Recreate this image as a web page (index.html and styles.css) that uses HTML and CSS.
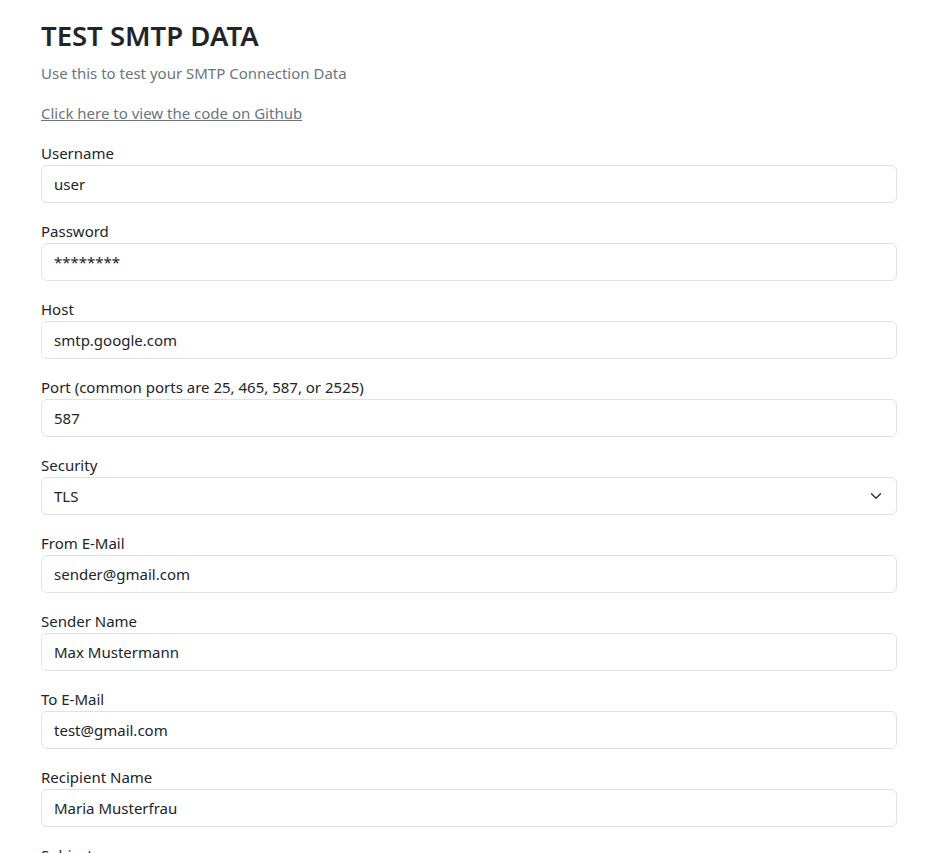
FILE: index.html
```html
<!DOCTYPE html>
<html lang="en">
<head>
<meta charset="utf-8">
<title>Test SMTP Data</title>
<link rel="stylesheet" href="styles.css">
</head>
<body>
<main class="container">
  <h2 class="title">TEST SMTP DATA</h2>
  <p class="lead-text">Use this to test your SMTP Connection Data</p>
  <p class="lead-text"><a class="gh-link" href="#">Click here to view the code on Github</a></p>
  <form class="form">
    <div class="field">
      <label class="label" for="username">Username</label>
      <input class="input" id="username" type="text" value="user">
    </div>
    <div class="field">
      <label class="label" for="password">Password</label>
      <input class="input" id="password" type="text" value="********">
    </div>
    <div class="field">
      <label class="label" for="host">Host</label>
      <input class="input" id="host" type="text" value="smtp.google.com">
    </div>
    <div class="field">
      <label class="label" for="port">Port (common ports are 25, 465, 587, or 2525)</label>
      <input class="input" id="port" type="text" value="587">
    </div>
    <div class="field">
      <label class="label" for="security">Security</label>
      <select class="input select" id="security">
        <option>TLS</option>
        <option>SSL</option>
        <option>None</option>
      </select>
    </div>
    <div class="field">
      <label class="label" for="from">From E-Mail</label>
      <input class="input" id="from" type="text" value="sender@gmail.com">
    </div>
    <div class="field">
      <label class="label" for="sender">Sender Name</label>
      <input class="input" id="sender" type="text" value="Max Mustermann">
    </div>
    <div class="field">
      <label class="label" for="to">To E-Mail</label>
      <input class="input" id="to" type="text" value="test@gmail.com">
    </div>
    <div class="field">
      <label class="label" for="recipient">Recipient Name</label>
      <input class="input" id="recipient" type="text" value="Maria Musterfrau">
    </div>
    <div class="field">
      <label class="label" for="subject">Subject</label>
      <input class="input" id="subject" type="text" value="Test">
    </div>
  </form>
</main>
</body>
</html>
```

FILE: styles.css
```css
html, body {
  margin: 0;
  padding: 0;
  height: 853px;
  overflow: hidden;
}
body {
  font-family: "Noto Sans", "Open Sans", sans-serif;
  font-size: 15px;
  line-height: 24px;
  color: #212529;
  background: #fff;
}
.container {
  padding: 0 41px;
  padding-top: 18px;
}
.title {
  margin: 0 0 8px;
  font-size: 27.5px;
  line-height: 35px;
  font-weight: 600;
  color: #212529;
}
.lead-text {
  margin: 0 0 16px;
  color: #6c757d;
}
.gh-link {
  color: #6c757d;
  text-decoration: underline;
}
.form {
  display: flex;
  flex-direction: column;
}
.field {
  display: flex;
  flex-direction: column;
  margin-bottom: 16px;
}
.label {
  display: block;
}
.input {
  display: block;
  box-sizing: border-box;
  width: 100%;
  height: 38px;
  padding: 6px 12px;
  font: inherit;
  color: #212529;
  background: #fff;
  border: 1px solid #dee2e6;
  border-radius: 6px;
  outline: none;
}
.select {
  appearance: none;
  -webkit-appearance: none;
  padding-right: 36px;
  background-image: url("data:image/svg+xml,%3csvg xmlns='http://www.w3.org/2000/svg' viewBox='0 0 16 16'%3e%3cpath fill='none' stroke='%23343a40' stroke-linecap='round' stroke-linejoin='round' stroke-width='2' d='m2 5 6 6 6-6'/%3e%3c/svg%3e");
  background-repeat: no-repeat;
  background-position: right 12px center;
  background-size: 16px 12px;
}
```
